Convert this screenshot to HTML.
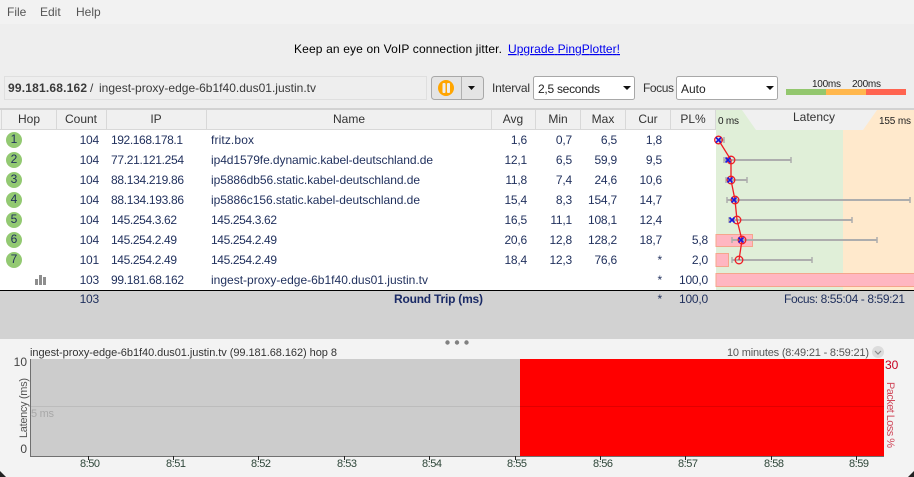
<!DOCTYPE html>
<html><head><meta charset="utf-8"><style>
html,body{margin:0;padding:0;width:914px;height:477px;overflow:hidden;background:#f0f0f0}
svg{display:block;font-family:"Liberation Sans",sans-serif;font-size:12px}
.h{fill:#333;text-anchor:middle}
.d{fill:#1f2f5c}
.r{fill:#1f2f5c;text-anchor:end;letter-spacing:-.2px}
.b{stroke:#adadad;stroke-width:2;fill:none}
.t{stroke:#adadad;stroke-width:1.5;fill:none}
.c{fill:none;stroke:#f01c24;stroke-width:1.3}
.x{stroke:#1818e0;stroke-width:1.6;fill:none}
.l{fill:#2d4538;text-anchor:middle;font-size:11px}
</style></head><body>
<svg width="914" height="477" viewBox="0 0 914 477" xmlns="http://www.w3.org/2000/svg">
<rect width="914" height="477" fill="#eeeeee"/>
<rect width="914" height="24" fill="#f2f2f2"/>
<g fill="#555"><text x="7" y="16">File</text><text x="40" y="16">Edit</text><text x="76" y="16">Help</text></g>
<text x="294" y="53" fill="#000" textLength="208">Keep an eye on VoIP connection jitter.</text>
<text x="508" y="53" fill="#0000ee" text-decoration="underline" textLength="112">Upgrade PingPlotter!</text>

<rect x="4.500" y="76.500" width="422" height="23" fill="#eeeeee" stroke="#dfdfdf"/>
<text x="8" y="92" fill="#3a3a3a" font-weight="bold" textLength="79">99.181.68.162</text>
<text x="90" y="92" fill="#3a3a3a">/</text>
<text x="99" y="92" fill="#3a3a3a" textLength="217">ingest-proxy-edge-6b1f40.dus01.justin.tv</text>

<rect x="431.500" y="76.500" width="52" height="23" rx="3" fill="#e4e4e4" stroke="#a8a8a8"/>
<line x1="461.500" y1="77" x2="461.500" y2="99" stroke="#b0b0b0"/>
<circle cx="446" cy="88" r="8" fill="#ffa500"/>
<rect x="442.500" y="83" width="3" height="10" rx="1" fill="#eeeeee"/><rect x="447" y="83" width="3" height="10" rx="1" fill="#eeeeee"/>
<path d="M468 86h7l-3.500 4z" fill="#111"/>

<text x="492" y="92" fill="#333" textLength="38">Interval</text>
<rect x="533.500" y="76.500" width="101" height="23" rx="2" fill="#fff" stroke="#a8a8a8"/>
<text x="538" y="93" fill="#222" textLength="62">2,5 seconds</text>
<path d="M623 86h8l-4 4z" fill="#111"/>
<text x="643" y="92" fill="#333" textLength="31">Focus</text>
<rect x="676.500" y="76.500" width="101" height="23" rx="2" fill="#fff" stroke="#a8a8a8"/>
<text x="681" y="93" fill="#222">Auto</text>
<path d="M766 86h8l-4 4z" fill="#111"/>

<g font-size="10" fill="#222"><text x="812" y="87" textLength="29">100ms</text><text x="852" y="87" textLength="29">200ms</text></g>
<rect x="786" y="89" width="40" height="6" fill="#93c76e"/>
<rect x="826" y="89" width="40" height="6" fill="#ffb74d"/>
<rect x="866" y="89" width="40" height="6" fill="#ff6450"/>

<!-- table header -->
<rect x="0" y="108" width="914" height="2" fill="#d2d2d2"/>
<rect x="0" y="110" width="914" height="20" fill="#f0f0f0"/>
<rect x="0" y="129" width="716" height="1" fill="#d8d8d8"/>
<g fill="#d8d8d8"><rect x="1" y="110" width="1" height="19"/><rect x="56" y="110" width="1" height="19"/><rect x="106" y="110" width="1" height="19"/><rect x="206" y="110" width="1" height="19"/><rect x="491" y="110" width="1" height="19"/><rect x="535" y="110" width="1" height="19"/><rect x="580" y="110" width="1" height="19"/><rect x="625" y="110" width="1" height="19"/><rect x="670" y="110" width="1" height="19"/><rect x="715" y="110" width="1" height="20"/></g>
<text class="h" x="29" y="123">Hop</text><text class="h" x="81" y="123">Count</text><text class="h" x="156" y="123">IP</text><text class="h" x="349" y="123">Name</text><text class="h" x="513" y="123">Avg</text><text class="h" x="558" y="123">Min</text><text class="h" x="603" y="123">Max</text><text class="h" x="648" y="123">Cur</text><text class="h" x="693" y="123">PL%</text>

<!-- table body -->
<rect x="0" y="130" width="716" height="160" fill="#fff"/>
<rect x="716" y="110" width="127" height="180" fill="#e0efd8"/>
<rect x="843" y="110" width="71" height="180" fill="#ffe9cc"/>
<polygon points="742,110 756,130 863,130 877,110" fill="#f0f0f0"/>
<text x="718" y="124" font-size="10" fill="#222" textLength="21">0 ms</text>
<text x="879" y="124" font-size="10" fill="#222" textLength="32">155 ms</text>
<text x="814" y="121" fill="#333" text-anchor="middle">Latency</text>

<!-- footer background -->
<rect x="0" y="290" width="914" height="1" fill="#000"/>
<rect x="0" y="291" width="914" height="48" fill="#d2d2d2"/>

<!-- hop circles -->
<g fill="#93c972">
<circle cx="14" cy="140" r="8"/><circle cx="14" cy="160" r="8"/><circle cx="14" cy="180" r="8"/><circle cx="14" cy="200" r="8"/><circle cx="14" cy="220" r="8"/><circle cx="14" cy="240" r="8"/><circle cx="14" cy="260" r="8"/>
</g>
<g class="d" text-anchor="middle"><text x="14" y="143">1</text><text x="14" y="163">2</text><text x="14" y="183">3</text><text x="14" y="203">4</text><text x="14" y="223">5</text><text x="14" y="243">6</text><text x="14" y="263">7</text></g>
<g fill="#8e8e8e"><rect x="35" y="279" width="3" height="6"/><rect x="39" y="275" width="3" height="10"/><rect x="43" y="277" width="3" height="8"/></g>

<g class="r">
<text x="99" y="144">104</text><text x="99" y="164">104</text><text x="99" y="184">104</text><text x="99" y="204">104</text><text x="99" y="224">104</text><text x="99" y="244">104</text><text x="99" y="264">101</text><text x="99" y="284">103</text><text x="99" y="303">103</text>
<text x="527" y="144">1,6</text><text x="527" y="164">12,1</text><text x="527" y="184">11,8</text><text x="527" y="204">15,4</text><text x="527" y="224">16,5</text><text x="527" y="244">20,6</text><text x="527" y="264">18,4</text>
<text x="572" y="144">0,7</text><text x="572" y="164">6,5</text><text x="572" y="184">7,4</text><text x="572" y="204">8,3</text><text x="572" y="224">11,1</text><text x="572" y="244">12,8</text><text x="572" y="264">12,3</text>
<text x="617" y="144">6,5</text><text x="617" y="164">59,9</text><text x="617" y="184">24,6</text><text x="617" y="204">154,7</text><text x="617" y="224">108,1</text><text x="617" y="244">128,2</text><text x="617" y="264">76,6</text>
<text x="662" y="144">1,8</text><text x="662" y="164">9,5</text><text x="662" y="184">10,6</text><text x="662" y="204">14,7</text><text x="662" y="224">12,4</text><text x="662" y="244">18,7</text><text x="662" y="264">*</text><text x="662" y="284">*</text><text x="662" y="303">*</text>
<text x="708" y="244">5,8</text><text x="708" y="264">2,0</text><text x="708" y="284">100,0</text><text x="708" y="303">100,0</text>
</g>
<g class="d">
<text x="111" y="144" textLength="72">192.168.178.1</text><text x="111" y="164" textLength="73">77.21.121.254</text><text x="111" y="184" textLength="73">88.134.219.86</text><text x="111" y="204" textLength="73">88.134.193.86</text><text x="111" y="224" textLength="66">145.254.3.62</text><text x="111" y="244" textLength="66">145.254.2.49</text><text x="111" y="264" textLength="66">145.254.2.49</text><text x="111" y="284" textLength="73">99.181.68.162</text>
<text x="211" y="144" textLength="43">fritz.box</text><text x="211" y="164" textLength="222">ip4d1579fe.dynamic.kabel-deutschland.de</text><text x="211" y="184" textLength="209">ip5886db56.static.kabel-deutschland.de</text><text x="211" y="204" textLength="209">ip5886c156.static.kabel-deutschland.de</text><text x="211" y="224" textLength="66">145.254.3.62</text><text x="211" y="244" textLength="66">145.254.2.49</text><text x="211" y="264" textLength="66">145.254.2.49</text><text x="211" y="284" textLength="217">ingest-proxy-edge-6b1f40.dus01.justin.tv</text>
</g>

<!-- graph -->
<g fill="#ffb6c1" stroke="#f5a58c"><rect x="716" y="234.500" width="36.500" height="12"/><rect x="716" y="253.500" width="12.500" height="13"/><rect x="716" y="273.500" width="199" height="13"/></g>
<g class="b"><path d="M718 140H724M724 160H791M726 180H747M727 200H910M729 220H852M732 240H877M732 260H812"/></g>
<g class="t"><path d="M724 137V143M724 157V163M791 157V163M726 177V183M747 177V183M727 197V203M910 197V203M729 217V223M852 217V223M732 237V243M877 237V243M732 257V263M812 257V263"/></g>
<path d="M718.500 140L731 160L731 180L735 200L737 220L742 240L739 260" fill="none" stroke="#f01c24" stroke-width="1.300"/>
<g class="c"><circle cx="718.500" cy="140" r="3.800"/><circle cx="731" cy="160" r="3.800"/><circle cx="731" cy="180" r="3.800"/><circle cx="735" cy="200" r="3.800"/><circle cx="737" cy="220" r="3.800"/><circle cx="742" cy="240" r="3.800"/><circle cx="739" cy="260" r="3.800"/></g>
<g class="x"><path d="M716 137.500l5 5m0-5l-5 5M725.500 157.500l5 5m0-5l-5 5M727.500 177.500l5 5m0-5l-5 5M731.500 197.500l5 5m0-5l-5 5M729.500 217.500l5 5m0-5l-5 5M738.500 237.500l5 5m0-5l-5 5"/></g>

<!-- footer text -->
<text x="394" y="303" font-weight="bold" fill="#1a2a66" textLength="89">Round Trip (ms)</text>
<text x="784" y="303" fill="#1f2f5c" textLength="121">Focus: 8:55:04 - 8:59:21</text>

<!-- lower panel -->
<rect x="0" y="339" width="914" height="138" fill="#f3f3f3"/>
<g fill="#808080"><circle cx="447.500" cy="342.500" r="2.200"/><circle cx="457" cy="342.500" r="2.200"/><circle cx="466.500" cy="342.500" r="2.200"/></g>
<text x="30" y="356" fill="#333" font-size="11" textLength="307">ingest-proxy-edge-6b1f40.dus01.justin.tv (99.181.68.162) hop 8</text>
<text x="727" y="356" fill="#555" font-size="11" textLength="142">10 minutes (8:49:21 - 8:59:21)</text>
<circle cx="878" cy="352" r="6" fill="#dcdcdc"/>
<path d="M875 351l3 3 3-3" fill="none" stroke="#888" stroke-width="1.200"/>

<rect x="30" y="359" width="490" height="97" fill="#cccccc"/>
<rect x="520" y="359" width="364" height="97" fill="#ff0000"/>
<rect x="31" y="406" width="489" height="1" fill="#bcbcbc"/>
<rect x="520" y="406" width="364" height="1" fill="#e00000"/>
<rect x="30" y="359" width="1" height="98" fill="#707070"/>
<rect x="30" y="456" width="854" height="1" fill="#707070"/>
<text x="31" y="417" fill="#a8a8a8" font-size="11" textLength="23">5 ms</text>
<g fill="#444" text-anchor="end"><text x="27" y="366">10</text><text x="27" y="453">0</text></g>
<text transform="translate(27,408) rotate(-90)" text-anchor="middle" fill="#555" font-size="11" textLength="60">Latency (ms)</text>
<text x="885" y="369" fill="#c80020">30</text>
<text transform="translate(887,415) rotate(90)" text-anchor="middle" fill="#d04a5c" font-size="11" textLength="66">Packet Loss %</text>
<g stroke="#222"><path d="M88.500 456v4M173.500 456v4M258.500 456v4M344.500 456v4M429.500 456v4M515.500 456v4M600.500 456v4M685.500 456v4M771.500 456v4M856.500 456v4"/></g>
<g class="l"><text x="90" y="467" textLength="20">8:50</text><text x="176" y="467" textLength="20">8:51</text><text x="261" y="467" textLength="20">8:52</text><text x="347" y="467" textLength="20">8:53</text><text x="432" y="467" textLength="20">8:54</text><text x="517" y="467" textLength="20">8:55</text><text x="603" y="467" textLength="20">8:56</text><text x="688" y="467" textLength="20">8:57</text><text x="774" y="467" textLength="20">8:58</text><text x="859" y="467" textLength="20">8:59</text></g>

<path d="M0 471L6 477H0z" fill="#222"/>
<path d="M914 471L908 477H914z" fill="#222"/>
</svg>
</body></html>
